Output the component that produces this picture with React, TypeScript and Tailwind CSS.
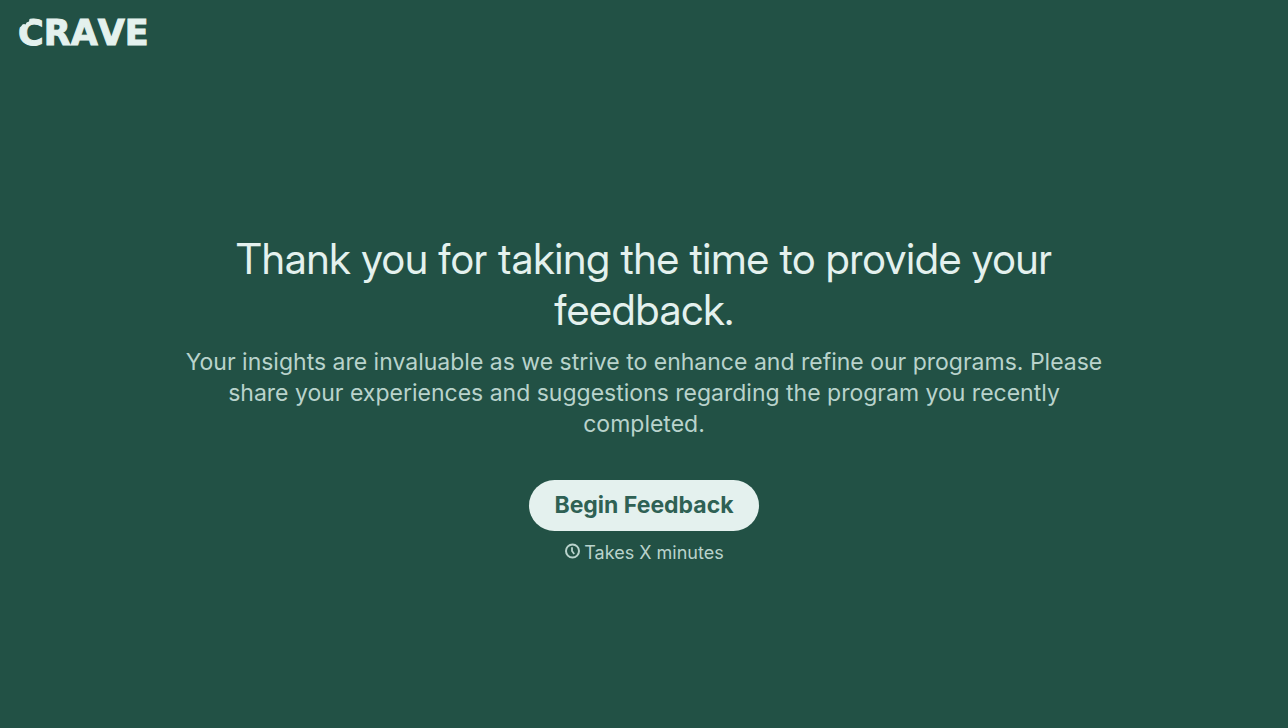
export default function App() {
  return (
    <div className="flex min-h-screen flex-col bg-[#225145] font-['Inter',sans-serif] text-[#e4f1ee]">
      <header className="flex h-[66px] items-center px-[18px]">
        <a
          href="#"
          className="relative font-['DejaVu_Sans',sans-serif] text-[35px] font-bold leading-none [-webkit-text-stroke:1px_#e4f1ee] [font-kerning:none]"
        >
          CRAVE
          <svg className="absolute left-0 top-0 size-4" viewBox="0 0 16 16" aria-hidden="true">
            <path d="M0 0H12L11 5.5Q8 6 7.5 8.5Q5 7 3 10.5L0 12Z" fill="#225145" />
          </svg>
        </a>
      </header>
      <main className="mx-auto flex w-full max-w-[984px] flex-1 flex-col items-center justify-center px-6 pb-16 pt-[70px] text-center">
        <h1 className="font-['Inter_Display','Inter',sans-serif] text-[42px] leading-[51px]">
          Thank you for taking the time to provide your feedback.
        </h1>
        <p className="mt-3 text-[23px] leading-[31px] text-[#b9d3cc]">
          Your insights are invaluable as we strive to enhance and refine our programs. Please share your experiences and suggestions regarding the program you recently completed.
        </p>
        <button className="mt-10 h-[51px] rounded-full bg-[#e4f1ee] px-[25px] text-[23px] font-bold text-[#2f6154]">Begin Feedback</button>
        <p className="mt-2 flex items-center gap-1 text-[18px] leading-7 text-[#b9d3cc]">
          <svg className="mb-1 size-4" viewBox="0 0 16 16" fill="none" stroke="currentColor" strokeWidth="2" aria-hidden="true">
            <circle cx="8.5" cy="8" r="6.5" />
            <path d="M8 4.2V8L10.2 11" strokeWidth="1.8" />
          </svg>
          Takes X minutes
        </p>
      </main>
    </div>
  );
}
